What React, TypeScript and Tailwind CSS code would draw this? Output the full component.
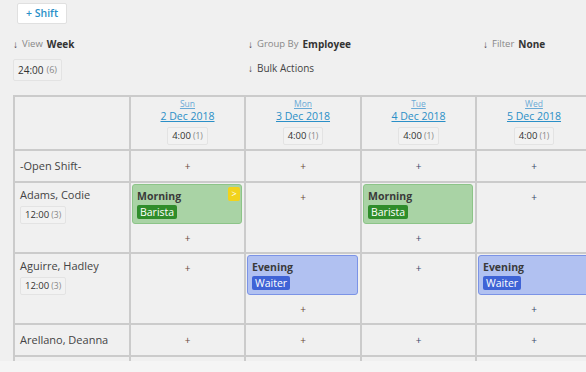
import React from "react";

type Shift = { title: string; role: string; kind: "morning" | "evening"; flag?: boolean };
type Cell = { shift?: Shift };

const days = [
  { dow: "Sun", date: "2 Dec 2018" },
  { dow: "Mon", date: "3 Dec 2018" },
  { dow: "Tue", date: "4 Dec 2018" },
  { dow: "Wed", date: "5 Dec 2018" },
];

const morning: Shift = { title: "Morning", role: "Barista", kind: "morning" };
const evening: Shift = { title: "Evening", role: "Waiter", kind: "evening" };

const rows: { name: string; hours?: string; count?: number; tall: boolean; cells: Cell[] }[] = [
  { name: "-Open Shift-", tall: false, cells: [{}, {}, {}, {}] },
  {
    name: "Adams, Codie",
    hours: "12:00",
    count: 3,
    tall: true,
    cells: [{ shift: { ...morning, flag: true } }, {}, { shift: morning }, {}],
  },
  {
    name: "Aguirre, Hadley",
    hours: "12:00",
    count: 3,
    tall: true,
    cells: [{}, { shift: evening }, {}, { shift: evening }],
  },
  { name: "Arellano, Deanna", tall: false, cells: [{}, {}, {}, {}] },
];

const colWidths = ["w-[116px]", "w-[115px]", "w-[116px]", "w-[115px]", "w-[116px]"];
// plus signs render slightly warm in the first two day columns, cool in the rest
const plusColors = ["text-[#6b4a3a]", "text-[#6b4a3a]", "text-[#3a4a6b]", "text-[#3a4a6b]"];

function Badge({ value, count }: { value: string; count: number }) {
  return (
    <div className="flex items-center gap-[2px] h-[18px] px-[4px] border border-[#e3e3e3] rounded-[2px] bg-[#f2f2f2] text-[9.5px] text-[#333]">
      {value}
      <span className="text-[8.5px] text-[#888]">({count})</span>
    </div>
  );
}

function ShiftCard({ shift }: { shift: Shift }) {
  const green = shift.kind === "morning";
  return (
    <div
      className={`relative h-[40px] rounded-[3px] border px-[4px] pt-[5px] ${
        green ? "bg-[#a9d3a5] border-[#8cc488]" : "bg-[#b1c1f1] border-[#7b93e6]"
      }`}
    >
      <div className="text-[10.5px] font-bold leading-[13px] text-[#3a3a3a]">{shift.title}</div>
      <div className="flex mt-[2px]">
        <span
          className={`rounded-[2px] px-[3px] text-[10.5px] leading-[14px] text-white ${
            green ? "bg-[#2f8d2b]" : "bg-[#3f63d6]"
          }`}
        >
          {shift.role}
        </span>
      </div>
      {shift.flag && (
        <span className="absolute right-[1px] top-[2px] w-[12px] h-[14px] rounded-[2px] bg-[#f2d31b] text-white text-[9px] leading-[14px] text-center">
          &gt;
        </span>
      )}
    </div>
  );
}

function Plus({ color }: { color: string }) {
  return <span className={`text-[10px] leading-[10px] ${color}`}>+</span>;
}

function Arrow() {
  return <span className="mr-[4px] text-[10px] text-[#444]">↓</span>;
}

export default function App() {
  return (
    <div className="w-[586px] h-[372px] bg-[#f5f5f5] overflow-hidden font-['Open_Sans','Noto_Sans',sans-serif]">
      <div className="h-[361px] bg-[#f0f0f0] flex flex-col overflow-hidden">
        <div className="flex pl-[17px] pt-[3px]">
          <button className="h-[21px] px-[8px] bg-white border border-[#e0e0e0] rounded-[2px] text-[10.5px] leading-[19px] font-semibold text-[#2a8fc7]">
            + Shift
          </button>
        </div>

        <div className="flex pl-[13px] mt-[11px] text-[#444]">
          <div className="w-[235px] flex flex-col">
            <div className="h-[18px] flex items-center text-[10px]">
              <Arrow />
              <span className="text-[9.5px] text-[#888] mr-[4px]">View</span>
              <span className="font-bold text-[#333]">Week</span>
            </div>
            <div className="mt-[6px] flex">
              <div className="flex items-center gap-[3px] h-[22px] px-[4px] border border-[#e3e3e3] rounded-[2px] bg-[#f2f2f2] text-[10px] text-[#333]">
                24:00
                <span className="text-[9px] text-[#888]">(6)</span>
              </div>
            </div>
          </div>
          <div className="w-[235px] flex flex-col">
            <div className="h-[18px] flex items-center text-[10px]">
              <Arrow />
              <span className="text-[9.5px] text-[#888] mr-[4px]">Group By</span>
              <span className="font-bold text-[#333]">Employee</span>
            </div>
            <div className="mt-[6px] h-[18px] flex items-center text-[10px]">
              <Arrow />
              Bulk Actions
            </div>
          </div>
          <div className="flex flex-col">
            <div className="h-[18px] flex items-center text-[10px]">
              <Arrow />
              <span className="text-[9.5px] text-[#888] mr-[4px]">Filter</span>
              <span className="font-bold text-[#333]">None</span>
            </div>
          </div>
        </div>

        <div className="ml-[13px] mt-[14px] h-[266px] w-[573px] overflow-hidden shrink-0">
          <div className="w-[582px] border-l-2 border-t-2 border-[#cbcbcb]">
            <div className="flex h-[54px]">
              <div className={`${colWidths[0]} shrink-0 border-r-2 border-b-2 border-[#cbcbcb]`} />
              {days.map((d, i) => (
                <div
                  key={d.dow}
                  className={`${colWidths[i + 1]} shrink-0 border-r-2 border-b-2 border-[#cbcbcb] flex flex-col items-center pt-[1px]`}
                >
                  <span className="text-[8.5px] leading-[11px] text-[#6aaad6] underline">{d.dow}</span>
                  <span className="text-[10.5px] leading-[14px] text-[#2a8fc7] underline">{d.date}</span>
                  <div className="mt-[4px]">
                    <Badge value="4:00" count={1} />
                  </div>
                </div>
              ))}
            </div>
            {rows.map((r, ri) => (
              <div key={ri} className={`flex ${r.tall ? "h-[71px]" : "h-[32px]"}`}>
                <div
                  className={`${colWidths[0]} shrink-0 border-r-2 border-b-2 border-[#cbcbcb] pl-[5px] flex flex-col ${
                    r.tall ? "pt-[4px]" : "justify-center"
                  }`}
                >
                  <div className="text-[11px] leading-[16px] text-[#444]">{r.name}</div>
                  {r.hours && (
                    <div className="mt-[3px] flex">
                      <Badge value={r.hours} count={r.count ?? 0} />
                    </div>
                  )}
                </div>
                {r.cells.map((c, ci) => (
                  <div
                    key={ci}
                    className={`${colWidths[ci + 1]} shrink-0 border-r-2 border-b-2 border-[#cbcbcb] flex flex-col`}
                  >
                    {c.shift ? (
                      <>
                        <div className="pl-[1px] pr-[2px] pt-[1px]">
                          <ShiftCard shift={c.shift} />
                        </div>
                        <div className="flex-1 flex items-center justify-center">
                          <Plus color={plusColors[ci]} />
                        </div>
                      </>
                    ) : r.tall ? (
                      <div className="flex justify-center pt-[9px]">
                        <Plus color={plusColors[ci]} />
                      </div>
                    ) : (
                      <div className="flex-1 flex items-center justify-center">
                        <Plus color={plusColors[ci]} />
                      </div>
                    )}
                  </div>
                ))}
              </div>
            ))}
            {/* next row, cut off by the scroll area */}
            <div className="flex h-[8px]">
              {colWidths.map((w, i) => (
                <div key={i} className={`${w} shrink-0 border-r-2 border-[#cbcbcb]`} />
              ))}
            </div>
          </div>
        </div>
      </div>
    </div>
  );
}
